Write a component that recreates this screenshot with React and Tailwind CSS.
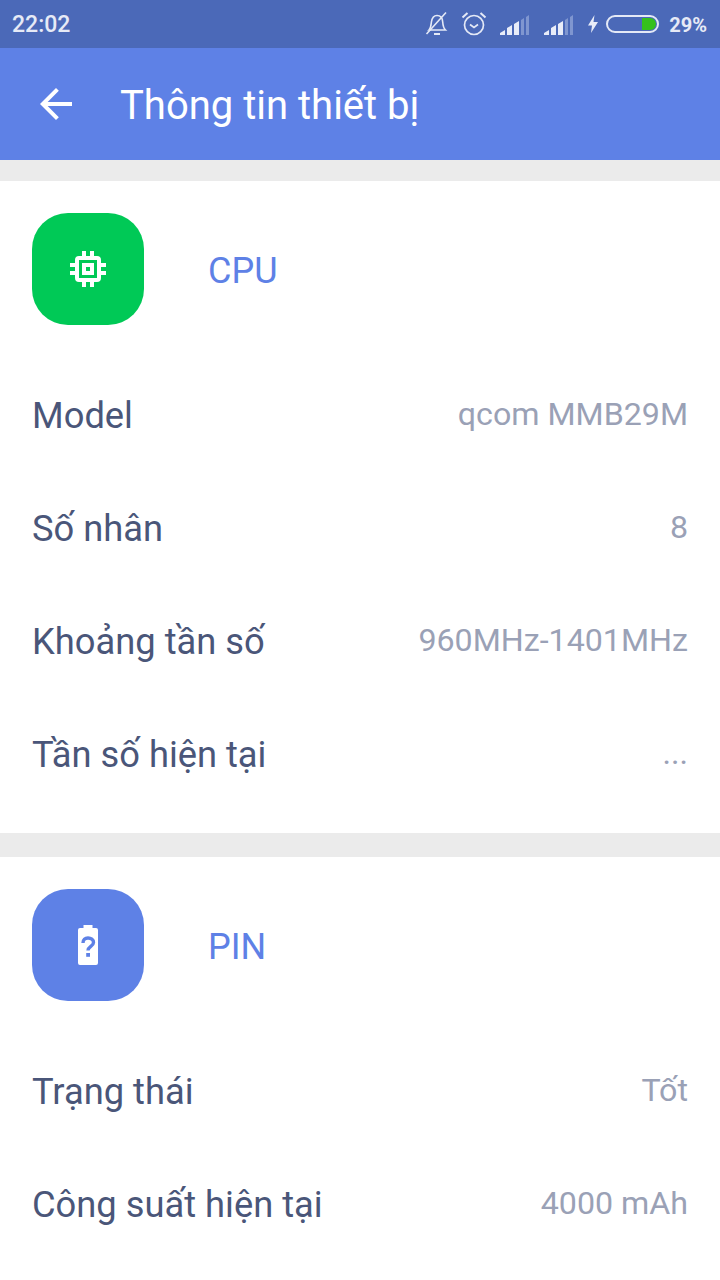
function MuteBell() {
  return (
    <svg width="24" height="26" viewBox="0 0 24 26" fill="none" stroke="#e4e9f6" strokeWidth="1.6">
      <path d="M4 19c2-2 2-5 2.400-8C7 7 9 4.500 12 4.500c4 0 5.500 3 5.700 6.500.2 3 .8 6 2.800 8H4z" />
      <path d="M1.500 23 21 1.500" />
      <path d="M9 23h6" strokeWidth="2" />
    </svg>
  );
}

function Alarm() {
  return (
    <svg width="26" height="26" viewBox="0 0 26 26" fill="none" stroke="#e4e9f6" strokeWidth="1.7">
      <circle cx="13" cy="14" r="9.500" />
      <path d="M9 13.500l4 3 4-3" />
      <path d="M1.500 6.500 6.500 2M24.500 6.500 19.500 2" strokeWidth="2" />
    </svg>
  );
}

function Signal() {
  return (
    <svg width="30" height="20" viewBox="0 0 30 20">
      <path d="M0 20v-2l5-3v5zM7 20v-7l5-3v10zM14 20V9l5-3v14z" fill="#e8ecf8" />
      <path d="M21 20V5l3-2v17zM26 20V2l3-2v20z" fill="#7f96d0" />
    </svg>
  );
}

function Battery() {
  return (
    <div className="w-[53px] h-[18px] rounded-full border-2 border-[#e4e9f6] flex justify-end items-center pr-[1px]">
      <div className="w-[14px] h-[12px] bg-[#35c01c] rounded-r-full" />
    </div>
  );
}

function StatusBar() {
  return (
    <div className="h-12 bg-[#4b69b8] flex items-center justify-between pl-3 pr-[13px] text-[#e6eaf6] font-bold">
      <span className="text-[23px] pt-[2px] font-medium">22:02</span>
      <div className="flex items-center">
        <MuteBell />
        <div className="ml-[12px]"><Alarm /></div>
        <div className="ml-[13px] mt-[2px]"><Signal /></div>
        <div className="ml-[14px] mt-[2px]"><Signal /></div>
        <svg width="12" height="20" viewBox="0 0 12 20" className="ml-[13px]">
          <path d="M7.500 1 1 11.500h4L4 19l7-11H6.500z" fill="#e8ecf8" />
        </svg>
        <div className="ml-[7px]"><Battery /></div>
        <span className="ml-[10px] pt-[2px] text-[20px]">29%</span>
      </div>
    </div>
  );
}

function Row({ label, value }) {
  return (
    <div className="h-[113px] flex items-center justify-between">
      <span className="text-[36.3px] pt-[4px] text-[#4a5679]">{label}</span>
      <span className="text-[32.2px] text-[#9aa1b6]">{value}</span>
    </div>
  );
}

function Section({ color, title, icon, rows, pb }) {
  return (
    <div className={`bg-white pt-8 px-8 ${pb}`}>
      <div className="flex items-center mb-[33px]">
        <div className={`w-28 h-28 rounded-[36px] flex items-center justify-center ${color}`}>
          {icon}
        </div>
        <span className="ml-16 pt-[4px] text-[36px] text-[#5e81e6]">{title}</span>
      </div>
      {rows.map((r) => (
        <Row key={r.label} label={r.label} value={r.value} />
      ))}
    </div>
  );
}

const cpuIcon = (
  <svg width="36" height="36" viewBox="0 0 36 36" fill="#fff">
    <path d="M12 0h4v5h4V0h4v5h3a4 4 0 0 1 4 4v3h5v4h-5v4h5v4h-5v3a4 4 0 0 1-4 4h-3v5h-4v-5h-4v5h-4v-5H9a4 4 0 0 1-4-4v-3H0v-4h5v-4H0v-4h5V9a4 4 0 0 1 4-4h3V0zM9 9v18h18V9H9z" fillRule="evenodd" />
    <path d="M12 12h12v12H12V12zm4 4v4h4v-4h-4z" fillRule="evenodd" />
  </svg>
);

const pinIcon = (
  <svg width="20" height="40" viewBox="0 0 20 40">
    <path d="M5.500 0h9v3H18a2 2 0 0 1 2 2v33a2 2 0 0 1-2 2H2a2 2 0 0 1-2-2V5a2 2 0 0 1 2-2h3.500V0z" fill="#fff" />
    <path d="M5 18c0-3.500 2-5 5-5s5.500 1.700 5.500 4.500c0 3.800-5.500 4-5.500 8" fill="none" stroke="#5e81e6" strokeWidth="3.400" />
    <rect x="8.200" y="28" width="3.800" height="3.800" fill="#5e81e6" />
  </svg>
);

export default function App() {
  return (
    <div className="w-[720px] h-[1280px] overflow-hidden bg-[#ebebeb] font-['Roboto',sans-serif]">
      <StatusBar />
      <div className="h-28 bg-[#5e81e6] flex items-center pl-[32px] text-white">
        <svg width="48" height="48" viewBox="0 0 24 24" fill="#fff">
          <path d="M20 11H7.830l5.590-5.590L12 4l-8 8 8 8 1.410-1.410L7.830 13H20v-2z" />
        </svg>
        <span className="ml-[40px] pt-[4px] text-[40px]">Thông tin thiết bị</span>
      </div>
      <div className="mt-[21px]">
        <Section
          color="bg-[#00c956]"
          title="CPU"
          icon={cpuIcon}
          pb="pb-[23px]"
          rows={[
            { label: "Model", value: "qcom MMB29M" },
            { label: "Số nhân", value: "8" },
            { label: "Khoảng tần số", value: "960MHz-1401MHz" },
            { label: "Tần số hiện tại", value: "..." },
          ]}
        />
      </div>
      <div className="mt-[24px]">
        <Section
          color="bg-[#5e81e6]"
          title="PIN"
          icon={pinIcon}
          pb="pb-6"
          rows={[
            { label: "Trạng thái", value: "Tốt" },
            { label: "Công suất hiện tại", value: "4000 mAh" },
          ]}
        />
      </div>
    </div>
  );
}
